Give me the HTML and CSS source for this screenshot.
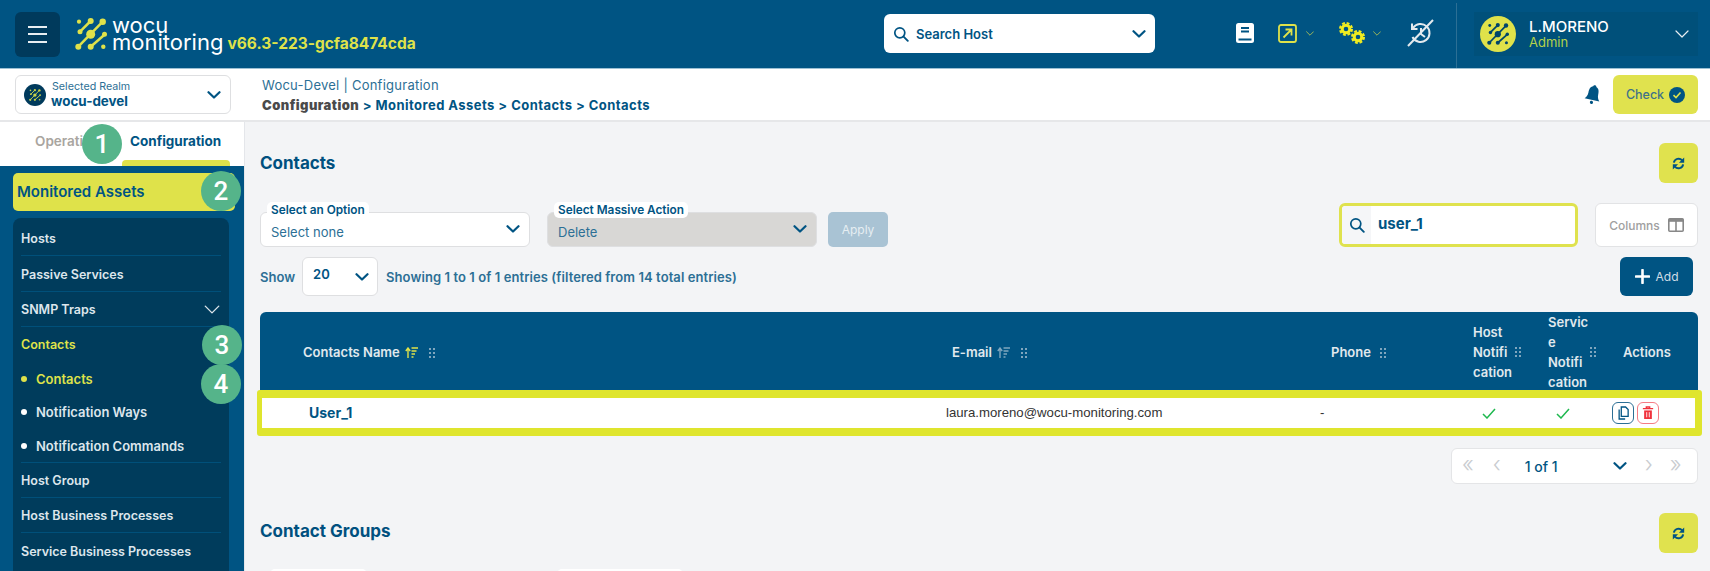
FILE: index.html
```html
<!DOCTYPE html>
<html>

<head>
  <title>Wocu Monitoring - Contacts</title>
  <link rel="stylesheet" href="styles.css">
</head>

<body>
  <svg class="sprite" xmlns="http://www.w3.org/2000/svg">
    <symbol id="chev" viewBox="0 0 14 8"><path d="M1.500 1.200 7 6.500l5.500-5.300" fill="none" stroke="currentColor" stroke-width="2.200" stroke-linecap="round" stroke-linejoin="round"/></symbol>
    <symbol id="chev-thin" viewBox="0 0 14 8"><path d="M1 1 7 7l6-6" fill="none" stroke="currentColor" stroke-width="1.200" stroke-linecap="round" stroke-linejoin="round"/></symbol>
    <symbol id="network" viewBox="0 0 32 32">
      <g fill="none" stroke="currentColor" stroke-width="2.500">
        <path d="M15.700 3 5 13.700"/><path d="M27.700 3.700 3.300 28.700"/><path d="M30 16.300 15.700 28.700"/>
      </g>
      <g fill="currentColor">
        <circle cx="4" cy="3.700" r="2.100"/><circle cx="15.700" cy="3" r="3"/><circle cx="27.700" cy="3.700" r="3.200"/>
        <circle cx="5" cy="13.700" r="2.500"/><circle cx="15.700" cy="16.300" r="4.500"/><circle cx="29.500" cy="16.300" r="2.500"/>
        <circle cx="3.300" cy="28.700" r="3"/><circle cx="15.700" cy="28.700" r="3"/><circle cx="28.300" cy="28.700" r="2.200"/>
      </g>
    </symbol>
    <symbol id="refresh" viewBox="0 0 16 16">
      <g fill="none" stroke="currentColor" stroke-width="2.400">
        <path d="M2.300 7A5.800 5.800 0 0 1 12.500 4.200"/><path d="M13.700 9A5.800 5.800 0 0 1 3.500 11.800"/>
      </g>
      <path d="M15 .5v6.500H8.500zM1 15.500V9h6.500z" fill="currentColor"/>
    </symbol>
    <symbol id="grip" viewBox="0 0 6 10"><g fill="currentColor"><rect width="2" height="2"/><rect x="4" width="2" height="2"/><rect y="4" width="2" height="2"/><rect x="4" y="4" width="2" height="2"/><rect y="8" width="2" height="2"/><rect x="4" y="8" width="2" height="2"/></g></symbol>
    <symbol id="sort" viewBox="0 0 13 11">
      <path d="M3 11V2M.8 4 3 1l2.200 3" fill="none" stroke="currentColor" stroke-width="1.400"/>
      <path d="M6.500 1H13M6.500 4h5M6.500 7h3.500M6.500 10H8.500" stroke="currentColor" stroke-width="1.400"/>
    </symbol>
    <symbol id="search" viewBox="0 0 16 16"><circle cx="6.800" cy="6.800" r="5" fill="none" stroke="currentColor" stroke-width="1.700"/><path d="m10.600 10.600 4.200 4.200" stroke="currentColor" stroke-width="1.900" stroke-linecap="round"/></symbol>
    <symbol id="check" viewBox="0 0 14 11"><path d="M1 6l4 4 8-9" fill="none" stroke="currentColor" stroke-width="1.500"/></symbol>
    <symbol id="gear" viewBox="0 0 14 14"><circle cx="7" cy="7" r="3.800" fill="none" stroke="currentColor" stroke-width="3"/><circle cx="7" cy="7" r="5.900" fill="none" stroke="currentColor" stroke-width="2.200" stroke-dasharray="2.800 1.830"/></symbol>
  </svg>

  <header class="topbar">
    <button class="menu-btn" type="button"><span></span><span></span><span></span></button>
    <svg class="logo-mark"><use href="#network"/></svg>
    <div class="logo-text"><span>wocu</span><span>monitoring</span></div>
    <span class="version">v66.3-223-gcfa8474cda</span>

    <div class="host-search">
      <svg class="ico-16"><use href="#search"/></svg>
      <span class="host-search-label">Search Host</span>
      <svg class="chev-14"><use href="#chev"/></svg>
    </div>

    <div class="top-icons">
      <svg class="book" viewBox="0 0 18 20"><rect width="18" height="20" rx="2.500" fill="#fff"/><path d="M5 5h8M5 8.500h8M2.500 16.500h13" stroke="#005483" stroke-width="1.800"/></svg>
      <svg class="ext" viewBox="0 0 19 19"><rect x="1" y="1" width="17" height="17" rx="2" fill="none" stroke="#DFE24A" stroke-width="1.800"/><path d="M5.500 13.500 13 6M7.500 5.500H13.500V11.500" fill="none" stroke="#DFE24A" stroke-width="1.800"/></svg>
      <svg class="mini-chev"><use href="#chev-thin"/></svg>
      <div class="gears"><svg class="gear-a"><use href="#gear"/></svg><svg class="gear-b"><use href="#gear"/></svg></div>
      <svg class="mini-chev"><use href="#chev-thin"/></svg>
      <svg class="history" viewBox="0 0 27 28"><g fill="none" stroke="#E4EAEE" stroke-width="2"><path d="M6 9a9 9 0 1 1-.5 9"/><path d="M5 4.500V10h5.500"/><path d="M14 9v6l4 3"/><path d="M1 27 26 1"/></g></svg>
    </div>

    <div class="user-wrap">
      <div class="user-box">
        <div class="avatar"><svg><use href="#network"/></svg></div>
        <div class="user-text"><span class="user-name">L.MORENO</span><span class="user-role">Admin</span></div>
        <svg class="user-chev"><use href="#chev-thin"/></svg>
      </div>
    </div>
  </header>

  <div class="subbar">
    <div class="realm">
      <div class="realm-icon"><svg><use href="#network"/></svg></div>
      <div class="realm-text"><span class="realm-label">Selected Realm</span><span class="realm-name">wocu-devel</span></div>
      <svg class="chev-14"><use href="#chev"/></svg>
    </div>
    <div class="crumbs">
      <div class="crumbs-top">Wocu-Devel | Configuration</div>
      <div class="crumbs-path"><b>Configuration</b> &gt; Monitored Assets &gt; Contacts &gt; Contacts</div>
    </div>
    <svg class="bell" viewBox="0 0 18 22"><g transform="rotate(12 9 11)" fill="#005483"><path d="M9 1c1 0 1.600.7 1.600 1.500C13.500 3.500 14 6.500 14 9.500c0 3 1 5 2.500 6.500h-15C3 14.500 4 12.500 4 9.500c0-3 .5-6 3.400-7C7.400 1.700 8 1 9 1z"/><circle cx="9" cy="18.500" r="1.600"/></g></svg>
    <button class="check-btn" type="button">Check
      <svg viewBox="0 0 16 16"><circle cx="8" cy="8" r="8" fill="#005483"/><path d="M4.500 8.200 7 10.500l4.500-5" fill="none" stroke="#E0E24E" stroke-width="1.600"/></svg>
    </button>
  </div>

  <div class="layout">
    <aside class="sidebar">
      <div class="tabs">
        <span class="tab">Operations</span>
        <span class="tab tab-active">Configuration</span>
      </div>
      <div class="side-body">
        <div class="section-title">Monitored Assets</div>
        <nav class="side-panel">
          <a class="side-item side-first">Hosts</a>
          <a class="side-item side-second">Passive Services</a>
          <a class="side-item">SNMP Traps <svg class="item-chev"><use href="#chev-thin"/></svg></a>
          <div class="side-group">
            <a class="side-group-title">Contacts</a>
            <a class="side-sub side-sub-active">Contacts</a>
            <a class="side-sub">Notification Ways</a>
            <a class="side-sub">Notification Commands</a>
          </div>
          <a class="side-item">Host Group</a>
          <a class="side-item">Host Business Processes</a>
          <a class="side-item">Service Business Processes</a>
        </nav>
      </div>
      <span class="callout callout-1">1</span>
      <span class="callout callout-2">2</span>
      <span class="callout callout-3">3</span>
      <span class="callout callout-4">4</span>
    </aside>

    <main class="content">
      <div class="block-head">
        <h2 class="block-title">Contacts</h2>
        <button class="refresh-btn" type="button"><svg><use href="#refresh"/></svg></button>
      </div>

      <div class="filters">
        <div class="select select-option">
          <span class="legend">Select an Option</span>
          <span>Select none</span>
          <svg class="chev-14"><use href="#chev"/></svg>
        </div>
        <div class="select select-action">
          <span class="legend">Select Massive Action</span>
          <span>Delete</span>
          <svg class="chev-14"><use href="#chev"/></svg>
        </div>
        <button class="apply-btn" type="button">Apply</button>
        <div class="table-search">
          <span class="table-search-addon"><svg class="ico-16"><use href="#search"/></svg></span>
          <span class="table-search-value">user_1</span>
        </div>
        <button class="columns-btn" type="button">Columns
          <svg viewBox="0 0 16 14"><rect x=".8" y=".8" width="14.400" height="12.400" rx="1" fill="none" stroke="#888" stroke-width="1.600"/><rect x=".8" y=".8" width="14.400" height="3" fill="#888"/><path d="M8 1v12" stroke="#888" stroke-width="1.600"/></svg>
        </button>
      </div>

      <div class="show-row">
        <span class="show-label">Show</span>
        <div class="page-size"><span>20</span><svg class="chev-14"><use href="#chev"/></svg></div>
        <span class="show-info">Showing 1 to 1 of 1 entries (filtered from 14 total entries)</span>
        <button class="add-btn" type="button">
          <svg viewBox="0 0 15 15"><path d="M7.500 1v13M1 7.500h13" stroke="#fff" stroke-width="2.600" stroke-linecap="round"/></svg>
          Add
        </button>
      </div>

      <div class="table-head">
        <div class="th th-name">Contacts Name <svg class="sort sort-on"><use href="#sort"/></svg><svg class="grip"><use href="#grip"/></svg></div>
        <div class="th">E-mail <svg class="sort"><use href="#sort"/></svg><svg class="grip"><use href="#grip"/></svg></div>
        <div class="th">Phone <svg class="grip"><use href="#grip"/></svg></div>
        <div class="th">Host<br>Notifi<br>cation <svg class="grip grip-mid"><use href="#grip"/></svg></div>
        <div class="th">Servic<br>e<br>Notifi<br>cation <svg class="grip grip-mid"><use href="#grip"/></svg></div>
        <div class="th">Actions</div>
      </div>

      <div class="table-row">
        <div class="td td-name">User_1</div>
        <div class="td td-mail">laura.moreno@wocu-monitoring.com</div>
        <div class="td td-mail">-</div>
        <div class="td"><svg class="ok"><use href="#check"/></svg></div>
        <div class="td"><svg class="ok"><use href="#check"/></svg></div>
        <div class="td td-actions">
          <button class="act act-copy" type="button"><svg viewBox="0 0 14 16"><path d="M5 1h5l3 3v8H5zM2.500 4v11h7" fill="none" stroke="#005483" stroke-width="1.500"/></svg></button>
          <button class="act act-del" type="button"><svg viewBox="0 0 14 16"><path d="M1 3h12M5 3V1h4v2" stroke="#F0323C" stroke-width="1.500" fill="none"/><path d="M2.500 5h9v10h-9z" fill="#F0323C"/><path d="M5.500 7v6M8.500 7v6" stroke="#fff"/></svg></button>
        </div>
      </div>

      <div class="pager-row">
        <div class="pager">
          <span class="pg-arrow pg-first">&laquo;</span>
          <span class="pg-arrow pg-prev">&lsaquo;</span>
          <span class="pg-text">1 of 1</span>
          <svg class="chev-14"><use href="#chev"/></svg>
          <span class="pg-arrow pg-next">&rsaquo;</span>
          <span class="pg-arrow pg-last">&raquo;</span>
        </div>
      </div>

      <div class="block-head block-groups">
        <h2 class="block-title">Contact Groups</h2>
        <button class="refresh-btn" type="button"><svg><use href="#refresh"/></svg></button>
      </div>
      <div class="filters-peek"><span></span><span></span></div>
    </main>
  </div>
</body>

</html>
```

FILE: styles.css
```css
/* Page */
html, body {
  margin: 0;
  height: 571px;
  overflow: hidden;
}

body {
  font-family: Inter, "Noto Sans", sans-serif;
  font-weight: 500;
  color: #005483;
  background-color: #F3F4F6;
  display: flex;
  flex-direction: column;
}

button {
  font-family: inherit;
  border: none;
  padding: 0;
}

.sprite {
  display: none;
}

.ico-16 {
  width: 16px;
  height: 16px;
  flex: none;
}

.chev-14 {
  width: 14px;
  height: 8px;
  flex: none;
  color: #005483;
}

/* Top bar */
.topbar {
  height: 68px;
  flex: none;
  background-color: #005483;
  border-bottom: 1px solid #9CC0D4;
  display: flex;
  align-items: center;
}

.menu-btn {
  width: 45px;
  height: 45px;
  margin-left: 15px;
  background-color: #003A5C;
  border-radius: 6px;
  display: flex;
  flex-direction: column;
  align-items: center;
  justify-content: center;
  gap: 5.500px;
}

.menu-btn span {
  width: 19px;
  height: 2px;
  background-color: #E8EEF2;
}

.logo-mark {
  width: 32px;
  height: 32px;
  margin-left: 15px;
  color: #DFE24A;
}

.logo-text {
  margin-left: 5px;
  display: flex;
  flex-direction: column;
  font-size: 22px;
  font-weight: 400;
  line-height: 17px;
  color: #FFFFFF;
}

.version {
  margin: 18px 0 0 4px;
  font-size: 15.500px;
  font-weight: 700;
  color: #DFE24A;
}

.host-search {
  position: absolute;
  left: 884px;
  top: 14px;
  width: 271px;
  height: 39px;
  box-sizing: border-box;
  padding: 0 9px;
  background-color: #FFFFFF;
  border-radius: 6px;
  display: flex;
  align-items: center;
  font-size: 13px;
  font-weight: 600;
}

.host-search-label {
  flex: 1;
  margin-left: 7px;
}

.top-icons {
  position: absolute;
  left: 1236px;
  top: 19px;
  display: flex;
  align-items: center;
  height: 28px;
}

.book {
  width: 18px;
  height: 20px;
}

.ext {
  width: 19px;
  height: 19px;
  margin-left: 24px;
}

.mini-chev {
  width: 8px;
  height: 5px;
  margin-left: 9px;
  color: #DFE24A;
}

.gears {
  width: 25px;
  height: 22px;
  margin-left: 25px;
  position: relative;
  color: #F0EC20;
}

.gear-a, .gear-b {
  width: 14px;
  height: 14px;
  position: absolute;
}

.gear-a {
  left: 0;
  top: 0;
}

.gear-b {
  left: 12px;
  top: 8px;
}

.history {
  width: 27px;
  height: 28px;
  margin-left: 26px;
}

.user-wrap {
  position: absolute;
  left: 1456px;
  top: 3px;
  height: 65px;
  border-left: 1px solid #2C6F95;
  padding: 9px 0 0 17px;
  box-sizing: border-box;
}

.user-box {
  width: 224px;
  height: 44px;
  background-color: #00507A;
  display: flex;
  align-items: center;
}

.avatar {
  width: 36px;
  height: 36px;
  margin-left: 6px;
  border-radius: 50%;
  background-color: #DFE24A;
  color: #00456B;
  display: flex;
  align-items: center;
  justify-content: center;
}

.avatar svg {
  width: 22px;
  height: 22px;
}

.user-text {
  margin-left: 13px;
  flex: 1;
  display: flex;
  flex-direction: column;
}

.user-name {
  font-size: 15px;
  line-height: 16px;
  font-weight: 500;
  color: #FFFFFF;
}

.user-role {
  font-size: 13px;
  line-height: 14px;
  font-weight: 400;
  color: #B5D24A;
}

.user-chev {
  width: 14px;
  height: 8px;
  margin-right: 9px;
  color: #E8EEF2;
}

/* Sub bar */
.subbar {
  height: 53px;
  flex: none;
  box-sizing: border-box;
  background-color: #FFFFFF;
  border-bottom: 2px solid #E6E7E9;
  display: flex;
  align-items: center;
  padding: 0 12px 0 15px;
}

.realm {
  width: 216px;
  height: 39px;
  box-sizing: border-box;
  border: 1px solid #DEDFE1;
  border-radius: 6px;
  display: flex;
  align-items: center;
  padding: 0 9px 0 8px;
}

.realm-icon {
  width: 22px;
  height: 22px;
  border-radius: 50%;
  background-color: #003A5C;
  color: #C9D24A;
  display: flex;
  align-items: center;
  justify-content: center;
}

.realm-icon svg {
  width: 12px;
  height: 12px;
}

.realm-text {
  flex: 1;
  margin-left: 5px;
  display: flex;
  flex-direction: column;
}

.realm-label {
  font-size: 10.700px;
  line-height: 12px;
  font-weight: 400;
  margin-left: 1px;
  color: #2C6F95;
}

.realm-name {
  font-size: 13.400px;
  line-height: 16px;
  font-weight: 700;
}

.crumbs {
  flex: 1;
  margin-left: 31px;
  font-size: 13px;
}

.crumbs-top {
  line-height: 20px;
  font-weight: 400;
  letter-spacing: .25px;
  color: #2C6F95;
}

.crumbs-path {
  line-height: 20px;
  font-weight: 700;
  letter-spacing: .45px;
}

.crumbs-path b {
  color: #4A4A4A;
}

.bell {
  width: 18px;
  height: 22px;
}

.check-btn {
  width: 85px;
  height: 39px;
  margin-left: 11px;
  background-color: #E0E24E;
  border-radius: 6px;
  display: flex;
  align-items: center;
  justify-content: center;
  gap: 5px;
  font-size: 12.500px;
  font-weight: 500;
  color: #3F7288;
}

.check-btn svg {
  width: 16px;
  height: 16px;
}

/* Layout */
.layout {
  flex: 1;
  display: flex;
  min-height: 0;
}

/* Sidebar */
.sidebar {
  width: 245px;
  flex: none;
  position: relative;
  background-color: #FFFFFF;
  border-right: 1px solid #E4E6EA;
  box-sizing: border-box;
}

.tabs {
  height: 44px;
  box-sizing: border-box;
  display: flex;
  padding-top: 10px;
  position: relative;
  font-size: 13.500px;
  line-height: 18px;
}

.tabs::after {
  content: "";
  position: absolute;
  left: 122px;
  bottom: 0;
  width: 108px;
  height: 6px;
  background-color: #DFE24A;
  border-radius: 4px 4px 0 0;
}

.tab {
  margin-left: 35px;
  width: 95px;
  font-weight: 600;
  color: #A9A5A0;
  white-space: nowrap;
  overflow: hidden;
}

.tab-active {
  margin-left: 0;
  width: 108px;
  color: #005483;
  font-weight: 700;
}

.side-body {
  height: 420px;
  box-sizing: border-box;
  background-color: #005483;
  padding: 7px 15px 0 13px;
  overflow: hidden;
}

.section-title {
  height: 38px;
  margin-right: -6px;
  padding-left: 4px;
  background-color: #DFE24A;
  border-radius: 5px;
  font-size: 15px;
  font-weight: 600;
  line-height: 38px;
}

.side-panel {
  margin-top: 7px;
  height: 420px;
  background-color: #003C5C;
  border-radius: 8px;
  padding: 0 8px;
  font-size: 12.500px;
  font-weight: 600;
  color: #DDE6EC;
}

.side-item {
  height: 35px;
  box-sizing: border-box;
  padding-top: 1px;
  border-bottom: 1px solid #00507A;
  display: flex;
  align-items: center;
  justify-content: space-between;
}

.side-first {
  height: 38px;
  padding-top: 4px;
}

.side-second {
  height: 36px;
}

.side-item:last-child {
  border-bottom: none;
}

.item-chev {
  width: 16px;
  height: 9px;
  color: #DDE6EC;
  margin-right: 1px;
}

.side-group {
  border-bottom: 1px solid #00507A;
  height: 136px;
  box-sizing: border-box;
}

.side-group-title {
  display: flex;
  align-items: center;
  height: 34px;
  color: #DFE24A;
}

.side-sub {
  height: 33.500px;
  box-sizing: border-box;
  display: flex;
  align-items: center;
  padding: 2px 0 0 15px;
  position: relative;
  font-size: 13px;
}

.side-sub::before {
  content: "";
  position: absolute;
  left: 0;
  width: 6px;
  height: 6px;
  border-radius: 50%;
  background-color: #FFFFFF;
}

.side-sub-active {
  color: #DFE24A;
}

.side-sub-active::before {
  background-color: #DFE24A;
}

/* Numbered callouts */
.callout {
  position: absolute;
  width: 40px;
  height: 40px;
  border-radius: 50%;
  background-color: #55B48A;
  color: #FFFFFF;
  font-family: Roboto, sans-serif;
  font-size: 26px;
  font-weight: 500;
  line-height: 40px;
  text-align: center;
}

.callout-1 {
  left: 82px;
  top: 2px;
}

.callout-2 {
  left: 201px;
  top: 49px;
}

.callout-3 {
  left: 202px;
  top: 203px;
}

.callout-4 {
  left: 201px;
  top: 242px;
}

/* Content */
.content {
  flex: 1;
  min-width: 0;
  padding: 21px 12px 0 15px;
}

.block-head {
  display: flex;
  align-items: center;
  justify-content: space-between;
  height: 40px;
}

.block-title {
  margin: 0;
  font-size: 17px;
  font-weight: 700;
  color: #00507F;
}

.refresh-btn {
  width: 39px;
  height: 40px;
  background-color: #E0E24E;
  border-radius: 6px;
  display: flex;
  align-items: center;
  justify-content: center;
  color: #005483;
}

.refresh-btn svg {
  width: 13px;
  height: 13px;
}

.block-groups {
  margin-top: 29px;
}

.block-groups .block-title {
  margin-top: -4px;
}

/* Filters */
.filters {
  margin-top: 20px;
  display: flex;
  align-items: flex-end;
}

.select {
  position: relative;
  width: 270px;
  height: 35px;
  box-sizing: border-box;
  border: 1px solid #DEDFE1;
  border-radius: 6px;
  background-color: #FFFFFF;
  display: flex;
  align-items: center;
  justify-content: space-between;
  padding: 4px 9px 0 10px;
  font-size: 13px;
  font-weight: 400;
  color: #2C6F95;
}

.select .chev-14 {
  margin-top: -5px;
}

.select-action {
  margin-left: 17px;
  background-color: #D8D7D5;
}

.legend {
  position: absolute;
  left: 6px;
  top: -11px;
  padding: 0 4px;
  height: 16px;
  line-height: 16px;
  background-color: #FFFFFF;
  border-radius: 5px;
  font-size: 11.800px;
  font-weight: 600;
  color: #005483;
}

.apply-btn {
  width: 60px;
  height: 35px;
  margin-left: 11px;
  background-color: #A9C3D4;
  border-radius: 5px;
  font-size: 12px;
  color: #E6EEF2;
}

.table-search {
  width: 239px;
  height: 44px;
  margin-left: auto;
  box-sizing: border-box;
  border: 3px solid #DFE24E;
  border-radius: 6px;
  background-color: #FFFFFF;
  display: flex;
  align-items: stretch;
}

.table-search-addon {
  width: 29px;
  background-color: #F5F6F8;
  border-radius: 4px 0 0 4px;
  display: flex;
  align-items: center;
  justify-content: center;
}

.table-search-value {
  margin-left: 7px;
  font-size: 15px;
  font-weight: 700;
  line-height: 36px;
}

.columns-btn {
  width: 103px;
  height: 44px;
  margin-left: 17px;
  box-sizing: border-box;
  border: 1px solid #E2E3E5;
  border-radius: 6px;
  background-color: #FFFFFF;
  display: flex;
  align-items: center;
  justify-content: center;
  gap: 8px;
  font-size: 12px;
  font-weight: 500;
  color: #A0A0A0;
}

.columns-btn svg {
  width: 16px;
  height: 14px;
}

/* Show row */
.show-row {
  margin-top: 10px;
  display: flex;
  align-items: center;
  font-size: 13px;
  font-weight: 600;
  color: #2C6F95;
}

.page-size {
  width: 76px;
  height: 39px;
  margin-left: 7px;
  box-sizing: border-box;
  border: 1px solid #DEDFE1;
  border-radius: 6px;
  background-color: #FFFFFF;
  display: flex;
  justify-content: space-between;
  align-items: center;
  padding: 0 8px 0 10px;
  font-size: 13px;
  color: #005483;
}

.page-size span {
  margin-top: -6px;
}

.show-info {
  margin-left: 8px;
  flex: 1;
  letter-spacing: .08px;
}

.add-btn {
  width: 73px;
  height: 39px;
  margin-right: 5px;
  background-color: #005483;
  border-radius: 6px;
  display: flex;
  align-items: center;
  justify-content: center;
  gap: 6px;
  font-size: 12px;
  color: #CFDDE6;
}

.add-btn svg {
  width: 15px;
  height: 15px;
}

/* Table */
.table-head {
  margin-top: 16px;
  height: 78px;
  background-color: #005483;
  border-radius: 6px 6px 0 0;
  display: grid;
  grid-template-columns: 692px 379px 142px 75px 75px 75px;
  align-items: center;
  font-size: 13px;
  font-weight: 600;
  line-height: 20px;
  color: #E0E9EE;
}

.th {
  position: relative;
  white-space: nowrap;
}

.th-name {
  padding-left: 43px;
}

.sort {
  width: 13px;
  height: 11px;
  margin-left: 2px;
  color: #7FA6BE;
  vertical-align: -1px;
}

.sort-on {
  color: #DFE24A;
}

.grip {
  width: 6px;
  height: 10px;
  margin-left: 6px;
  color: #7FA6BE;
  vertical-align: -1px;
}

.sort + .grip {
  margin-left: 11px;
}

.grip-mid {
  position: absolute;
  left: 42px;
  top: 50%;
  margin: -5px 0 0 0;
}

.table-row {
  margin: 0 -4px 0 -3px;
  height: 46px;
  box-sizing: border-box;
  border: solid #DFE52E;
  border-width: 8px 7px 8px 5px;
  border-radius: 3px;
  background-color: #FFFFFF;
  display: grid;
  grid-template-columns: 684px 374px 162px 74px 56px 1fr;
  align-items: center;
}

.td-name {
  padding-left: 47px;
  margin-top: -2px;
  font-size: 14px;
  font-weight: 700;
}

.td-mail {
  margin-top: -2px;
  font-family: "Liberation Sans", sans-serif;
  font-size: 13.200px;
  font-weight: 400;
  color: #333;
}

.ok {
  width: 14px;
  height: 11px;
  color: #1FB84F;
  display: block;
}

.td-actions {
  display: flex;
  gap: 3px;
}

.act {
  width: 22px;
  height: 22px;
  box-sizing: border-box;
  background-color: #FFFFFF;
  border-radius: 6px;
  display: flex;
  align-items: center;
  justify-content: center;
}

.act svg {
  width: 12px;
  height: 14px;
}

.act-copy {
  border: 1px solid #2C6F95;
}

.act-del {
  border: 1px solid #F57C84;
}

/* Pager */
.pager-row {
  margin-top: 12px;
  display: flex;
  justify-content: flex-end;
}

.pager {
  width: 247px;
  height: 36px;
  box-sizing: border-box;
  border: 1px solid #E4E5E7;
  border-radius: 6px;
  background-color: #FFFFFF;
  display: flex;
  align-items: center;
  font-size: 14px;
}

.pg-arrow {
  font-size: 22px;
  font-weight: 300;
  line-height: 30px;
  margin-top: -4px;
  color: #C9CCD0;
}

.pg-first {
  margin-left: 10px;
}

.pg-prev {
  margin-left: 19px;
}

.pg-text {
  margin-left: 24px;
  width: 88px;
  font-weight: 500;
}

.pg-next {
  margin-left: 18px;
}

.pg-last {
  margin-left: 17px;
}

/* Next block, cut off by the window */
.filters-peek {
  margin-top: 16px;
  display: flex;
  padding-left: 10px;
  gap: 190px;
}

.filters-peek span {
  width: 97px;
  height: 16px;
  background-color: #FFFFFF;
  border-radius: 5px;
}

.filters-peek span:last-child {
  width: 126px;
}
```
